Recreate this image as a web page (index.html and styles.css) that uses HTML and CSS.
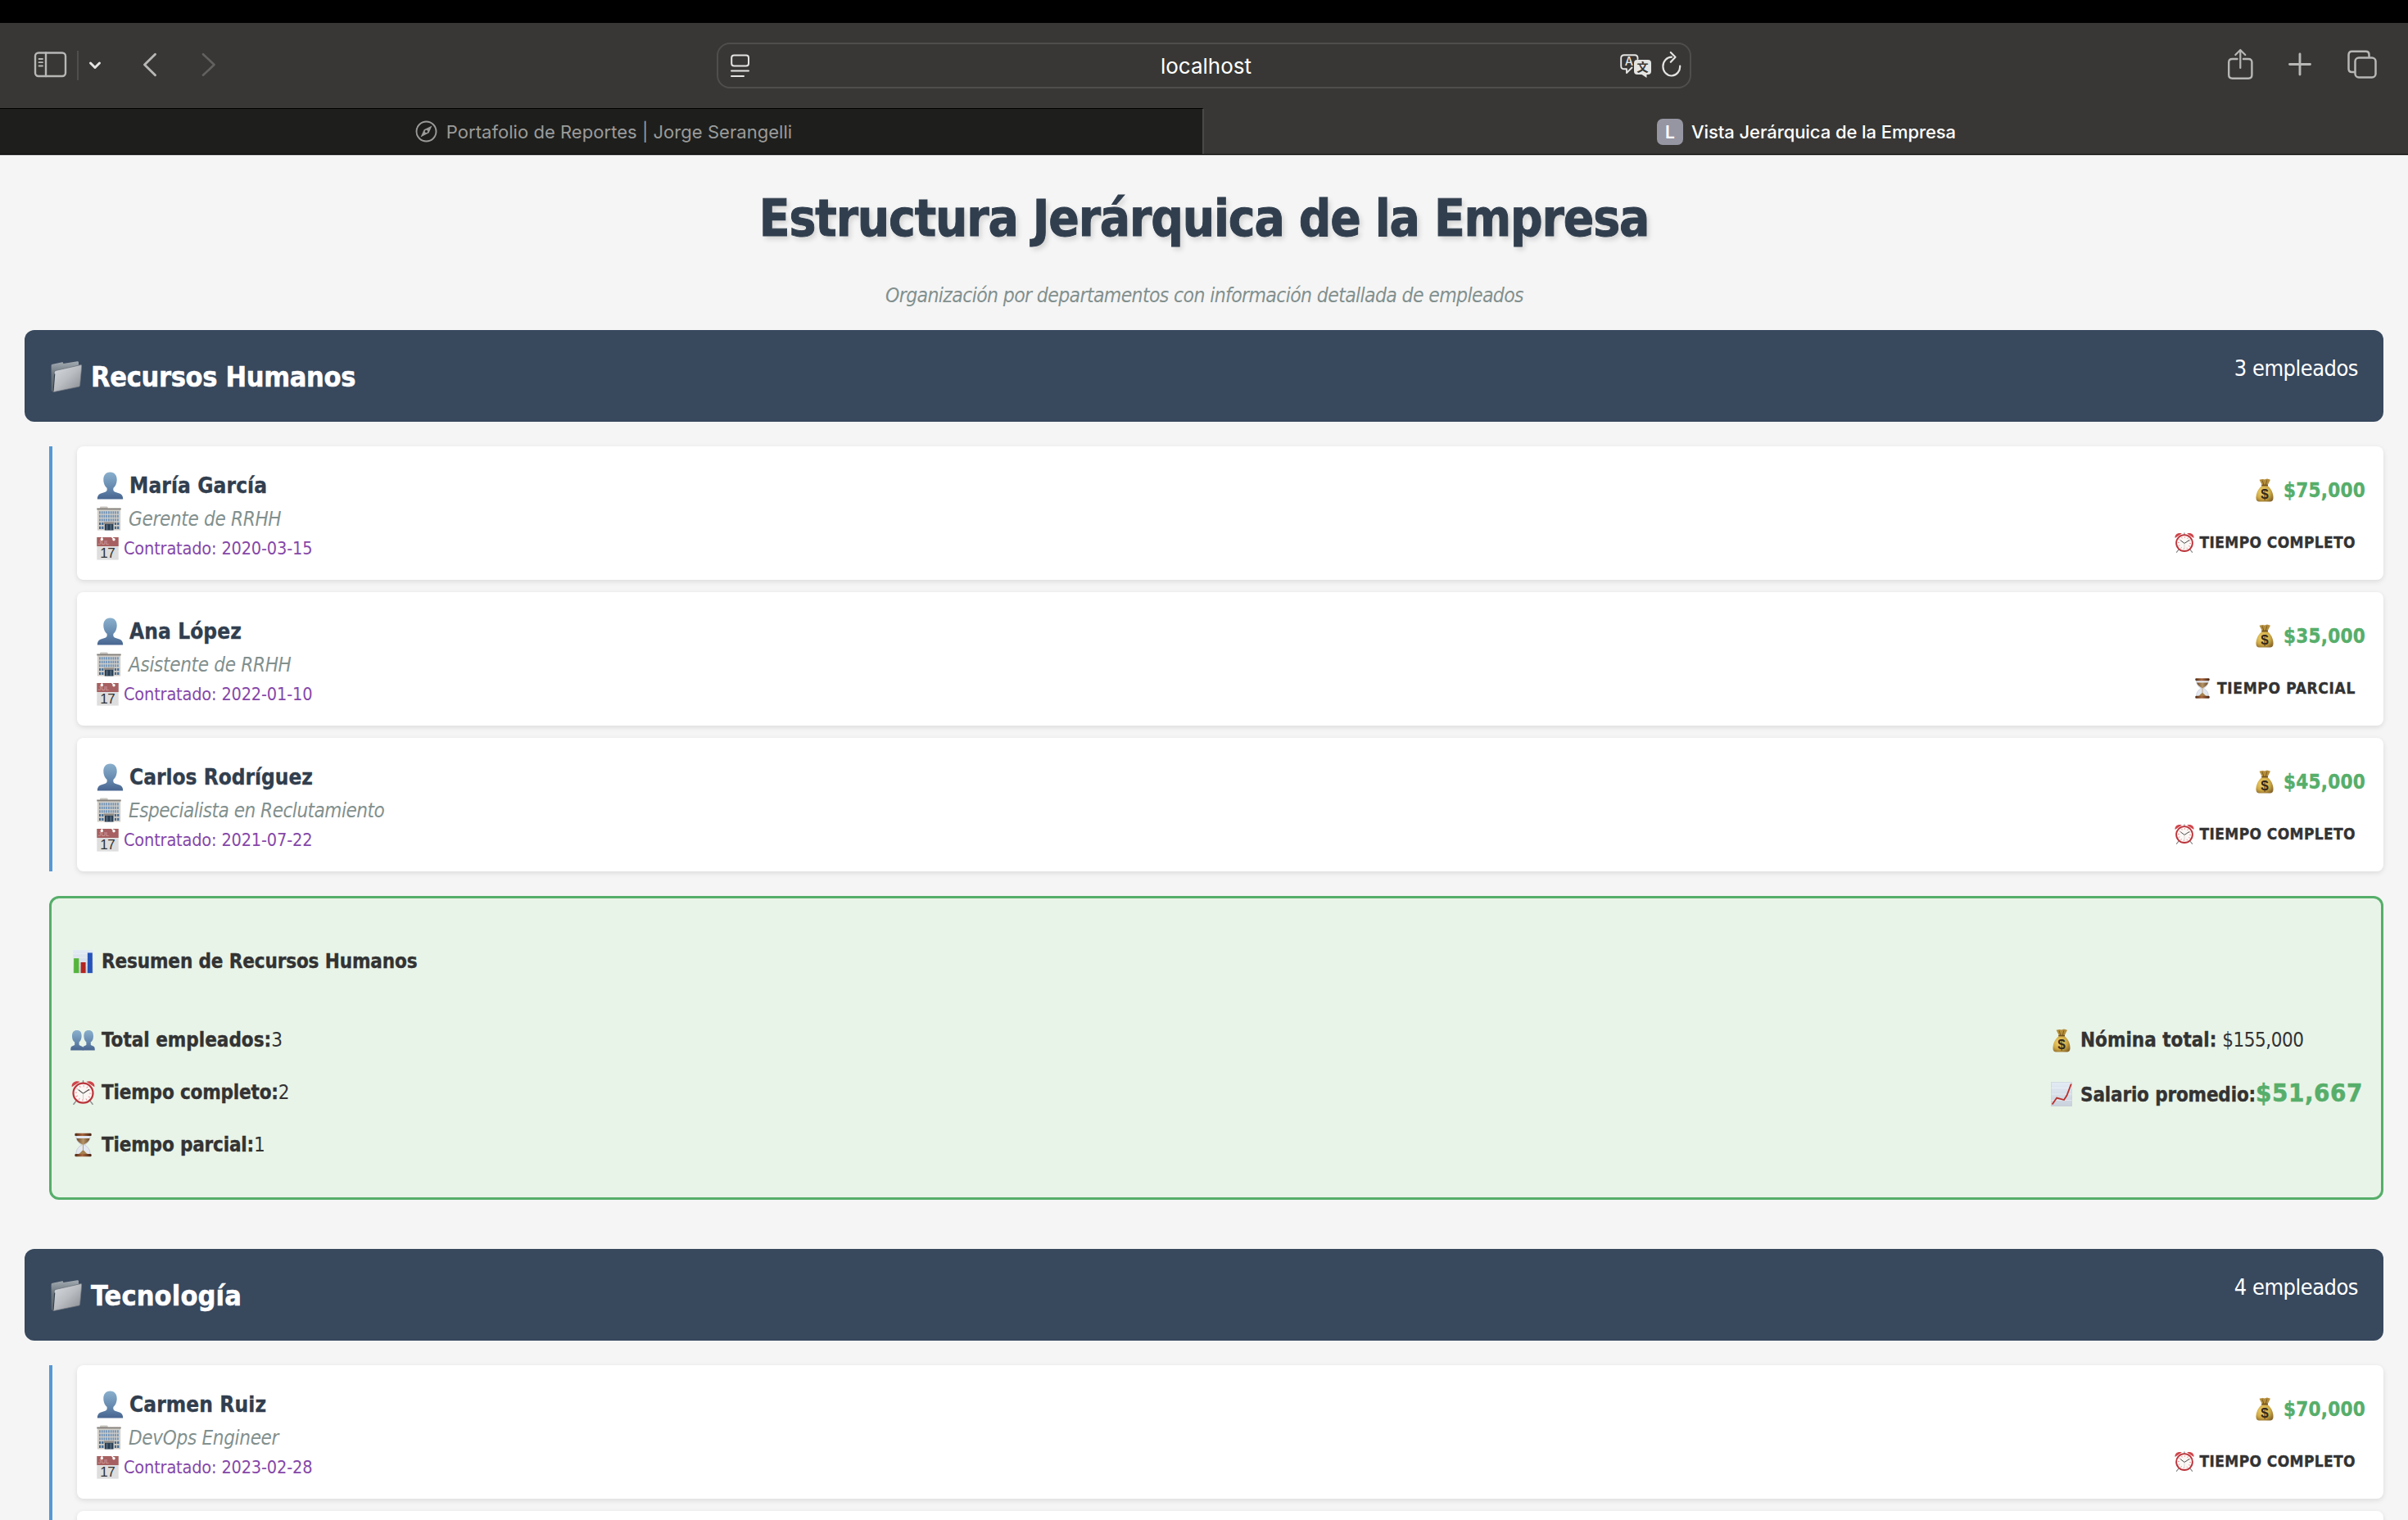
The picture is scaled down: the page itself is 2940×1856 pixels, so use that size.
FILE: index.html
```html
<!DOCTYPE html>
<html lang="es">
<head>
<meta charset="utf-8">
<title>Vista Jerárquica de la Empresa</title>
<link rel="stylesheet" href="styles.css">
</head>
<body>
<svg class="defs" width="0" height="0" aria-hidden="true">
  <defs>
    <linearGradient id="g-person" x1="0" y1="0" x2="0" y2="1"><stop offset="0" stop-color="#8ab0cd"/><stop offset=".6" stop-color="#6487ad"/><stop offset="1" stop-color="#48658f"/></linearGradient>
    <linearGradient id="g-front" x1="0" y1="0" x2="1" y2="1"><stop offset="0" stop-color="#d9dce0"/><stop offset=".5" stop-color="#b9bdc2"/><stop offset="1" stop-color="#85898f"/></linearGradient>
    <linearGradient id="g-back" x1="0" y1="0" x2="0" y2="1"><stop offset="0" stop-color="#a3abb2"/><stop offset=".4" stop-color="#6f7981"/><stop offset="1" stop-color="#59626a"/></linearGradient>
    <radialGradient id="g-bag" cx=".4" cy=".4" r=".7"><stop offset="0" stop-color="#f1d878"/><stop offset=".6" stop-color="#cfa945"/><stop offset="1" stop-color="#8a682a"/></radialGradient>
    <linearGradient id="g-cap" x1="0" y1="0" x2="1" y2="0"><stop offset="0" stop-color="#4e2814"/><stop offset=".45" stop-color="#a9683f"/><stop offset="1" stop-color="#43200f"/></linearGradient>
    <linearGradient id="g-sand" x1="0" y1="0" x2="1" y2="0"><stop offset="0" stop-color="#6b4a2b"/><stop offset=".5" stop-color="#b59468"/><stop offset="1" stop-color="#694829"/></linearGradient>
    <linearGradient id="g-paper" x1="0" y1="0" x2="0" y2="1"><stop offset="0" stop-color="#e3ebf5"/><stop offset="1" stop-color="#c9d1dc"/></linearGradient>

    <symbol id="folder" viewBox="0 0 38 38">
      <path d="M.6 5.5Q.6 4 2 3.700L14 1.200Q15 1 15.200 2.200V3L32.500.200Q34 0 34 1.500V5L4.500 12 2.500 37Q.6 37.500.6 35Z" fill="url(#g-back)"/>
      <path d="M6 11.500 36.500 4.600Q38 4.400 37.800 6L35.600 29.500Q35.500 31 34 31.300L4 37.500Q2.400 37.800 2.600 36L4.400 13.500Q4.600 11.900 6 11.500Z" fill="url(#g-front)" stroke="#70767d" stroke-width=".7"/>
      <path d="M4.700 15.500 3 36.800" stroke="#33404d" stroke-width="1.200" fill="none"/>
    </symbol>
    <symbol id="person" viewBox="0 0 32 34">
      <path d="M16 .500C21.500.500 24.200 4.500 24.200 9.500 24.200 14 22.300 18 20 19.800 19.400 22.500 20 24 22 24.800L28 26.800Q31.600 28.200 31.700 33.500H.3Q.4 28.200 4 26.800L10 24.800C12 24 12.600 22.500 12 19.800 9.700 18 7.800 14 7.800 9.500 7.800 4.500 10.500.500 16 .500Z" fill="url(#g-person)"/>
    </symbol>
    <symbol id="people" viewBox="0 0 30 26">
      <path d="M7.800 1C12 1 13.600 3.600 13.600 8 13.600 11.700 12 14.500 10.600 15.600V19L15 21.200Q15.800 22 15.800 25.500H.2Q.2 21.500 1.500 20.800L5.200 19V15.600C3.200 14.500 2 11.700 2 8 2 3.600 4 1 7.800 1Z" fill="url(#g-person)"/>
      <path d="M22.200 1C26.200 1 28 3.600 28 8 28 11.700 26.800 14.500 24.800 15.600V19L28.500 20.800Q29.800 21.500 29.800 25.500H14.800Q14.800 21.500 16 20.800L19.400 19V15.600C18 14.500 16.400 11.700 16.400 8 16.400 3.600 18.200 1 22.200 1Z" fill="url(#g-person)"/>
    </symbol>
    <symbol id="building" viewBox="0 0 30 30">
      <path d="M4 1.200Q4 .5 5 .5H12.500Q13.500 .5 13.500 1.200V3H4Z" fill="#c9c6c1"/>
      <path d="M.8 3.500H29.200V29.500H.8Z" fill="#d3cfc9"/>
      <path d="M.3 2.500H29.700V4.400H.3Z" fill="#85807b"/>
      <path d="M3 7.800H27M3 12.300H27M3 16.800H27" stroke="#7094b8" stroke-width="3.200" stroke-dasharray="1.800 .95"/>
      <path d="M3 21.500H8.500M21.900 21.500H27.400M3 26.300H8.500M21.900 26.300H27.400" stroke="#446a8f" stroke-width="3.200" stroke-dasharray="2.200 1"/>
      <path d="M8.800 19.500H21.300V21.800H8.800Z" fill="#8e8984"/>
      <path d="M9.800 21.800H20.500V29.500H9.800Z" fill="#2b3f53"/>
      <path d="M12.700 22.500V29.500M17.300 22.500V29.500" stroke="#7f97ac" stroke-width=".8"/>
    </symbol>
    <symbol id="calendar" viewBox="0 0 27 28">
      <path d="M.3 0H26.700V27.600H.3Z" fill="#dedede"/>
      <path d="M.3 0H26.700V11H.3Z" fill="#a76061"/>
      <circle cx="6.300" cy="2.500" r="1.700" fill="#fff"/><circle cx="21" cy="2.800" r="1.700" fill="#fff"/>
      <path d="M6.500 0V2M18.500 0 21 2" stroke="#fff" stroke-width="1.300"/>
      <text x="1.800" y="9.300" class="cal-month">JUL</text>
      <text x="13.300" y="25" text-anchor="middle" class="cal-day">17</text>
    </symbol>
    <symbol id="bag" viewBox="0 0 22 29">
      <path d="M4.500 1.800 8.500 1 11 1.600 14 .6 18 1.700 14.600 8.500H8Z" fill="#b58e3c"/>
      <path d="M8 2.500 10 8M13.800 2.300 12.400 8" stroke="#75571f" stroke-width=".9"/>
      <path d="M7.800 9H14.400C19 12.500 21.500 18 21.500 23.500 21.500 27.500 20 28.500 17 28.500H5C2 28.500.5 27.500.5 23.500.5 18 3.200 12.500 7.800 9Z" fill="url(#g-bag)"/>
      <path d="M7.200 8.600H15" stroke="#70501f" stroke-width="1.600"/>
      <text x="11" y="25" text-anchor="middle" class="bag-sign">$</text>
    </symbol>
    <symbol id="clock" viewBox="0 0 30 31">
      <path d="M6 26.500 3 30.300M24 26.500 27 30.300M15 .8V4" stroke="#8d8d8d" stroke-width="1.500" stroke-linecap="round"/>
      <path d="M.8 8.500C-.3 4 4.500-.3 11 1.800Z" fill="#cf454a"/><path d="M29.200 8.500C30.300 4 25.500-.3 19 1.800Z" fill="#cf454a"/>
      <circle cx="15" cy="16.200" r="12.400" fill="#fbf7f5" stroke="#bb343b" stroke-width="2.300"/>
      <circle cx="15" cy="16.200" r="8.900" fill="none" stroke="#e7898b" stroke-width="2.400" stroke-dasharray=".9 3.760"/>
      <path d="M9 12 15 16.700 22.700 11.700" fill="none" stroke="#444" stroke-width="1.200"/><path d="M15 16V24" stroke="#bdbdbd" stroke-width=".7"/>
    </symbol>
    <symbol id="hourglass" viewBox="0 0 22 30">
      <path d="M2 3H20C20 9 17.500 12.500 12.500 15 17.500 17.500 20 21 20 27H2C2 21 4.500 17.500 9.500 15 4.500 12.500 2 9 2 3Z" fill="#e3e8f1" stroke="#b9c0cc" stroke-width=".7"/>
      <path d="M2.500 6.500H19.500C18.600 10.300 15.500 12.500 11.500 14.700H10.500C6.500 12.500 3.400 10.300 2.500 6.500Z" fill="url(#g-sand)"/>
      <path d="M11 14.500V22" stroke="#a98354" stroke-width=".8"/><path d="M4.500 27C7.500 25.500 9 22.500 11 21.500 13 22.500 14.500 25.500 17.500 27Z" fill="#a5824f"/>
      <rect x=".4" y="0" width="21.200" height="3.600" rx="1.300" fill="url(#g-cap)"/><rect x=".4" y="26.400" width="21.200" height="3.600" rx="1.300" fill="url(#g-cap)"/>
    </symbol>
    <symbol id="bars" viewBox="0 0 26 30">
      <path d="M.3.300H25.700V29.700H.3Z" fill="url(#g-paper)"/>
      <path d="M.3 5H25.700M.3 10H25.700M.3 15H25.700M.3 20H25.700" stroke="#fff" stroke-opacity=".6" stroke-width=".6"/>
      <path d="M1.200 11H7.600V29.700H1.200Z" fill="#53b53a"/><path d="M10 16H16.200V29.700H10Z" fill="#b3261f"/><path d="M18.600 4H24.800V29.700H18.600Z" fill="#2653b8"/>
    </symbol>
    <symbol id="trend" viewBox="0 0 26 30">
      <path d="M.3.300H25.700V29.700H.3Z" fill="url(#g-paper)" stroke="#bcc6d2" stroke-width=".6"/>
      <path d="M.3 7.500H25.700M.3 15H25.700M.3 22.500H25.700" stroke="#fff" stroke-opacity=".6" stroke-width=".7"/>
      <path d="M1.600 27.500 7.200 19.600 16 22 19.500 16.500 24.800 2.500" fill="none" stroke="#b8322c" stroke-width="1.800"/>
    </symbol>
  </defs>
</svg>

<header class="browser">
  <div class="toolbar">
    <div class="tools-left">
      <svg width="300" height="40" viewBox="0 0 300 40" class="glyph">
        <rect x="43" y="4.500" width="37" height="28.500" rx="4" stroke-width="2.400"/>
        <path d="M56 4.500V33" stroke-width="2.400"/><path d="M47.500 12H52M47.500 16.200H52M47.500 20.500H52" stroke-width="1.800"/>
        <path d="M95 2V38" stroke="#4f4e4c" stroke-width="2" stroke-linecap="butt"/>
        <path d="M110.500 17 116 22.500 121.500 17" stroke="#e4e4e3" stroke-width="3"/>
        <path d="M189.500 6.200 176.500 19 189.500 31.800" stroke-width="2.900"/>
        <path d="M248 6.200 261.500 19 248 31.800" stroke="#62615f" stroke-width="2.600"/>
      </svg>
    </div>
    <div class="address">
      <svg width="24" height="40" viewBox="0 0 24 40" class="glyph bright"><rect x="1.200" y="7.500" width="20.800" height="13" rx="3" stroke-width="2"/><path d="M1 26.600H22M1 33H16" stroke-width="2"/></svg>
      <span class="host">localhost</span>
      <svg width="76" height="40" viewBox="0 0 76 40" class="glyph bright">
        <path d="M14.500 22.500 8 29V24.300H5Q1.200 24.300 1.200 20.500V11Q1.200 7.300 5 7.300H18Q21.500 7.300 21.500 11V12" stroke-width="1.900"/>
        <text x="11" y="19.800" text-anchor="middle" class="tr-a">A</text>
        <path d="M21 13H34Q38 13 38 17V27Q38 31 34 31H32.500V35L26.500 31H21Q17 31 17 27V17Q17 13 21 13Z" fill="#e4e4e3" stroke="none"/>
        <text x="27.500" y="27" text-anchor="middle" class="tr-zh">文</text>
        <path d="M63 9.700A10.400 11.400 0 1 0 73.200 20.500" stroke-width="2.200"/><path d="M61.800 4 67.500 9.800 61.800 15.800" stroke-width="2.200"/>
      </svg>
    </div>
    <div class="tools-right">
      <svg width="190" height="44" viewBox="0 -2 190 44" class="glyph">
        <path d="M12.500 12H6.500Q2.200 12 2.200 16V31.500Q2.200 35.700 6.500 35.700H26.200Q30.400 35.700 30.400 31.500V16Q30.400 12 26.200 12H20" stroke-width="2.400"/>
        <path d="M16.300 23V1.500M10.300 7 16.300 1 22.300 7" stroke-width="2.200"/>
        <path d="M76.500 18.500H101.500M89 6V31" stroke-width="2.900"/>
        <path d="M155 28H152.500Q148.500 28 148.500 24V7Q148.500 2.800 152.500 2.800H169.500Q173.500 2.800 173.500 7V9" stroke-width="2.500"/>
        <rect x="156.500" y="10.500" width="25" height="24" rx="4.500" stroke-width="2.500"/>
      </svg>
    </div>
  </div>
  <nav class="tabs">
    <div class="tab tab-idle">
      <svg width="27" height="27" viewBox="0 0 27 27"><circle cx="13.500" cy="13.500" r="12" fill="none" stroke="#9b9b9a" stroke-width="1.900"/><path d="M20.500 6.500 16.600 15.300 6.500 20.500 10.700 11.200Z" fill="#9b9b9a"/><circle cx="13.500" cy="13.400" r="1.700" fill="#1e1f1d"/></svg>
      <span>Portafolio de Reportes | Jorge Serangelli</span>
    </div>
    <div class="tab tab-active"><b class="favicon">L</b><span>Vista Jerárquica de la Empresa</span></div>
  </nav>
</header>

<main class="page">
  <h1 class="title">Estructura Jerárquica de la Empresa</h1>
  <p class="subtitle">Organización por departamentos con información detallada de empleados</p>

  <section class="dept">
    <div class="dept-head">
      <h2 class="dept-name"><svg class="i-folder"><use href="#folder"/></svg><span>Recursos Humanos</span></h2>
      <span class="dept-count">3 empleados</span>
    </div>
    <div class="staff">
      <article class="card">
        <div class="who">
          <div class="name"><svg class="i-person"><use href="#person"/></svg>María García</div>
          <div class="role"><svg class="i-building"><use href="#building"/></svg><span>Gerente de RRHH</span></div>
          <div class="hired"><svg class="i-calendar"><use href="#calendar"/></svg>Contratado: 2020-03-15</div>
        </div>
        <div class="terms">
          <div class="salary"><svg class="i-bag"><use href="#bag"/></svg><span>$75,000</span></div>
          <div class="shift"><svg class="i-clock"><use href="#clock"/></svg>TIEMPO COMPLETO</div>
        </div>
      </article>
      <article class="card">
        <div class="who">
          <div class="name"><svg class="i-person"><use href="#person"/></svg>Ana López</div>
          <div class="role"><svg class="i-building"><use href="#building"/></svg><span>Asistente de RRHH</span></div>
          <div class="hired"><svg class="i-calendar"><use href="#calendar"/></svg>Contratado: 2022-01-10</div>
        </div>
        <div class="terms">
          <div class="salary"><svg class="i-bag"><use href="#bag"/></svg><span>$35,000</span></div>
          <div class="shift part"><svg class="i-hourglass"><use href="#hourglass"/></svg>TIEMPO PARCIAL</div>
        </div>
      </article>
      <article class="card">
        <div class="who">
          <div class="name long">
            <svg class="i-person"><use href="#person"/></svg><span>Carlos Rodríguez</span></div>
          <div class="role long"><svg class="i-building"><use href="#building"/></svg><span>Especialista en Reclutamiento</span></div>
          <div class="hired"><svg class="i-calendar"><use href="#calendar"/></svg>Contratado: 2021-07-22</div>
        </div>
        <div class="terms">
          <div class="salary"><svg class="i-bag"><use href="#bag"/></svg><span>$45,000</span></div>
          <div class="shift"><svg class="i-clock"><use href="#clock"/></svg>TIEMPO COMPLETO</div>
        </div>
      </article>
    </div>
    <div class="summary">
      <h3 class="sum-title"><span class="cell"><svg width="25" height="30"><use href="#bars"/></svg></span>Resumen de Recursos Humanos</h3>
      <div class="sum-body">
        <div class="sum-col">
          <div class="sum-row"><span class="cell"><svg width="30" height="26"><use href="#people"/></svg></span><span><b>Total empleados:</b>3</span></div>
          <div class="sum-row tight"><span class="cell"><svg width="29" height="30"><use href="#clock"/></svg></span><span><b>Tiempo completo:</b>2</span></div>
          <div class="sum-row tight"><span class="cell"><svg width="21" height="30"><use href="#hourglass"/></svg></span><span><b>Tiempo parcial:</b>1</span></div>
        </div>
        <div class="sum-col">
          <div class="sum-row"><span class="cell"><svg width="22" height="29"><use href="#bag"/></svg></span><span><b>Nómina total:</b> <span class="total">$155,000</span></span></div>
          <div class="sum-row tight"><span class="cell"><svg width="26" height="30"><use href="#trend"/></svg></span><span><b>Salario promedio:</b><strong class="average">$51,667</strong></span></div>
        </div>
      </div>
    </div>
  </section>

  <section class="dept">
    <div class="dept-head">
      <h2 class="dept-name tech"><svg class="i-folder"><use href="#folder"/></svg><span>Tecnología</span></h2>
      <span class="dept-count">4 empleados</span>
    </div>
    <div class="staff">
      <article class="card">
        <div class="who">
          <div class="name"><svg class="i-person"><use href="#person"/></svg>Carmen Ruiz</div>
          <div class="role"><svg class="i-building"><use href="#building"/></svg><span>DevOps Engineer</span></div>
          <div class="hired"><svg class="i-calendar"><use href="#calendar"/></svg>Contratado: 2023-02-28</div>
        </div>
        <div class="terms">
          <div class="salary"><svg class="i-bag"><use href="#bag"/></svg><span>$70,000</span></div>
          <div class="shift"><svg class="i-clock"><use href="#clock"/></svg>TIEMPO COMPLETO</div>
        </div>
      </article>
      <article class="card"></article>
    </div>
  </section>
</main>
</body>
</html>
```
FILE: styles.css
```css
* { box-sizing: border-box; }

html { overflow: hidden; }
body {
  display: flex;
  flex-direction: column;
  margin: 0;
  height: 1856px;
  overflow: hidden;
  background: #f5f5f5;
  color: #333;
  font-family: "DejaVu Sans Condensed", "DejaVu Sans", sans-serif;
  font-size: 24px;
}

svg { display: block; flex: none; }
.defs { position: absolute; }

/* Browser chrome */
.browser {
  flex: none;
  height: 190px;
  border-top: 28px solid #000;
  border-bottom: 1px solid #b9b9b8;
  background: #383735;
  font-family: Inter, sans-serif;
}
.toolbar {
  display: grid;
  grid-template-columns: 1fr 1190px 1fr;
  align-items: center;
  height: 104px;
}
.glyph {
  fill: none;
  stroke: #b7b7b6;
  stroke-linecap: round;
  stroke-linejoin: round;
}
.glyph.bright { stroke: #e4e4e3; }
.tools-right { display: flex; justify-content: flex-end; padding-right: 31px; }
.address {
  display: flex;
  align-items: center;
  justify-content: space-between;
  height: 56px;
  padding: 0 9px 0 15px;
  border: 2px solid #4f4e4c;
  border-radius: 16px;
}
.host {
  padding: 1px 0 0 51px;
  color: #fff;
  font-size: 26px;
  line-height: 40px;
}
.tr-a { fill: #e4e4e3; stroke: none; font: 500 14.5px Inter, sans-serif; }
.tr-zh { fill: #383735; stroke: none; font: bold 14px "Noto Sans CJK SC", sans-serif; }

.tabs { display: grid; grid-template-columns: 1470px 1fr; height: 57px; border-bottom: 1px solid #000; }
.tab {
  display: flex;
  align-items: center;
  justify-content: center;
  gap: 10px;
  border-top: 1px solid #383735;
  font-size: 22px;
  line-height: 40px;
}
.tab-idle {
  gap: 11px;
  padding-left: 6px;
  border-top-color: #000;
  border-right: 2px solid #4a4947;
  background: #1e1f1d;
  color: #9b9b9a;
  letter-spacing: .04px;
}
.tab-active { padding-left: 1px; color: #fff; font-weight: 500; letter-spacing: -.07px; }
.favicon {
  width: 32px;
  height: 32px;
  border-radius: 7px;
  background: #9696a3;
  font-size: 21px;
  font-weight: 600;
  line-height: 33px;
  text-align: center;
}

/* Page */
.page { flex: 1; min-height: 0; overflow: hidden; padding: 37px 30px 0; }
.title {
  margin: 0 0 39px;
  color: #313e4e;
  font-size: 61.5px;
  line-height: 80px;
  letter-spacing: -1.13px;
  text-align: center;
  text-shadow: 3px 4px 6px rgba(0, 0, 0, .14);
  -webkit-text-stroke: .9px;
}
.subtitle {
  margin: 0 0 27px;
  padding-left: 1px;
  color: #82908e;
  font-size: 24.5px;
  font-style: italic;
  line-height: 30px;
  letter-spacing: -.618px;
  text-align: center;
}

.dept { margin-bottom: 60px; }
.dept-head {
  display: flex;
  justify-content: space-between;
  height: 112px;
  padding: 0 31px 0 32px;
  border-radius: 12px;
  background: #38485d;
  color: #fff;
}
.dept-name {
  display: flex;
  align-items: center;
  gap: 11px;
  margin: 0;
  padding-top: 2px;
  font-size: 34px;
  line-height: 40px;
  letter-spacing: -.33px;
  -webkit-text-stroke: .5px;
}
.dept-name.tech { letter-spacing: .15px; }
.dept-count { padding-top: 27px; font-size: 27px; line-height: 40px; letter-spacing: -.5px; }
.i-folder { width: 38px; height: 38px; }

.staff {
  display: flex;
  flex-direction: column;
  gap: 15px;
  margin: 30px 0 30px 30px;
  padding-left: 30px;
  border-left: 4px solid #5698d6;
}
.card {
  display: flex;
  flex: none;
  justify-content: space-between;
  height: 163px;
  padding: 28px 22px 0 24px;
  border-radius: 8px;
  background: #fff;
  box-shadow: 0 2px 6px rgba(0, 0, 0, .11);
}
.who > div, .terms > div { display: flex; align-items: center; }
.name, .salary, .shift, .sum-title, .sum-row b { -webkit-text-stroke: .35px; }
.name { height: 40px; gap: 7px; color: #313e4e; font-size: 26px; font-weight: bold; line-height: 40px; letter-spacing: .12px; }
.name.long { letter-spacing: 0; }
.role { height: 40px; gap: 9px; color: #82908e; font-style: italic; line-height: 40px; letter-spacing: -.3px; }
.role span, .salary span { padding-top: 1px; }
.role.long { letter-spacing: -.47px; }
.hired { height: 34px; gap: 6px; color: #8547a8; font-size: 21.5px; line-height: 34px; letter-spacing: -.15px; }
.i-person { width: 33px; height: 34px; }
.i-building { width: 30px; height: 30px; }
.i-calendar { width: 27px; height: 28px; }
.terms { display: flex; flex-direction: column; align-items: flex-end; gap: 24px; padding-top: 5px; }
.terms > div { height: 40px; }
.salary { gap: 12px; color: #56ae6a; font-weight: bold; line-height: 40px; letter-spacing: .25px; }
.shift { gap: 7px; padding-right: 12px; font-size: 19px; font-weight: bold; line-height: 40px; letter-spacing: .353px; }
.shift.part { gap: 9px; letter-spacing: .65px; }
.i-bag { width: 22px; height: 29px; }
.i-clock { width: 24px; height: 25px; }
.i-hourglass { width: 18px; height: 25px; }
.cal-month { fill: #d9a5a3; font: 7.5px "Liberation Sans", sans-serif; letter-spacing: 0; }
.cal-day { fill: #333; font: 17px "Liberation Sans", sans-serif; letter-spacing: -.5px; }
.bag-sign { fill: #33291a; font: bold 17px "Liberation Sans", sans-serif; letter-spacing: 0; }

.summary {
  height: 371px;
  margin-left: 30px;
  padding: 57px 22px 0 23px;
  border: 3px solid #56ae6a;
  border-radius: 12px;
  background: #e9f4e8;
  line-height: 40px;
}
.sum-title, .sum-row { display: flex; align-items: center; gap: 8px; }
.sum-title { margin: 0 0 56px; font-size: 24px; letter-spacing: -.13px; }
.cell { display: flex; justify-content: center; width: 30px; }
.sum-body { display: flex; justify-content: space-between; align-items: flex-start; }
.sum-col { display: flex; flex-direction: column; gap: 24px; }
.tight { letter-spacing: -.17px; }
.total { letter-spacing: -.466px; }
.average { color: #56ae6a; font-size: 31px; letter-spacing: .563px; -webkit-text-stroke: .5px; }
```
